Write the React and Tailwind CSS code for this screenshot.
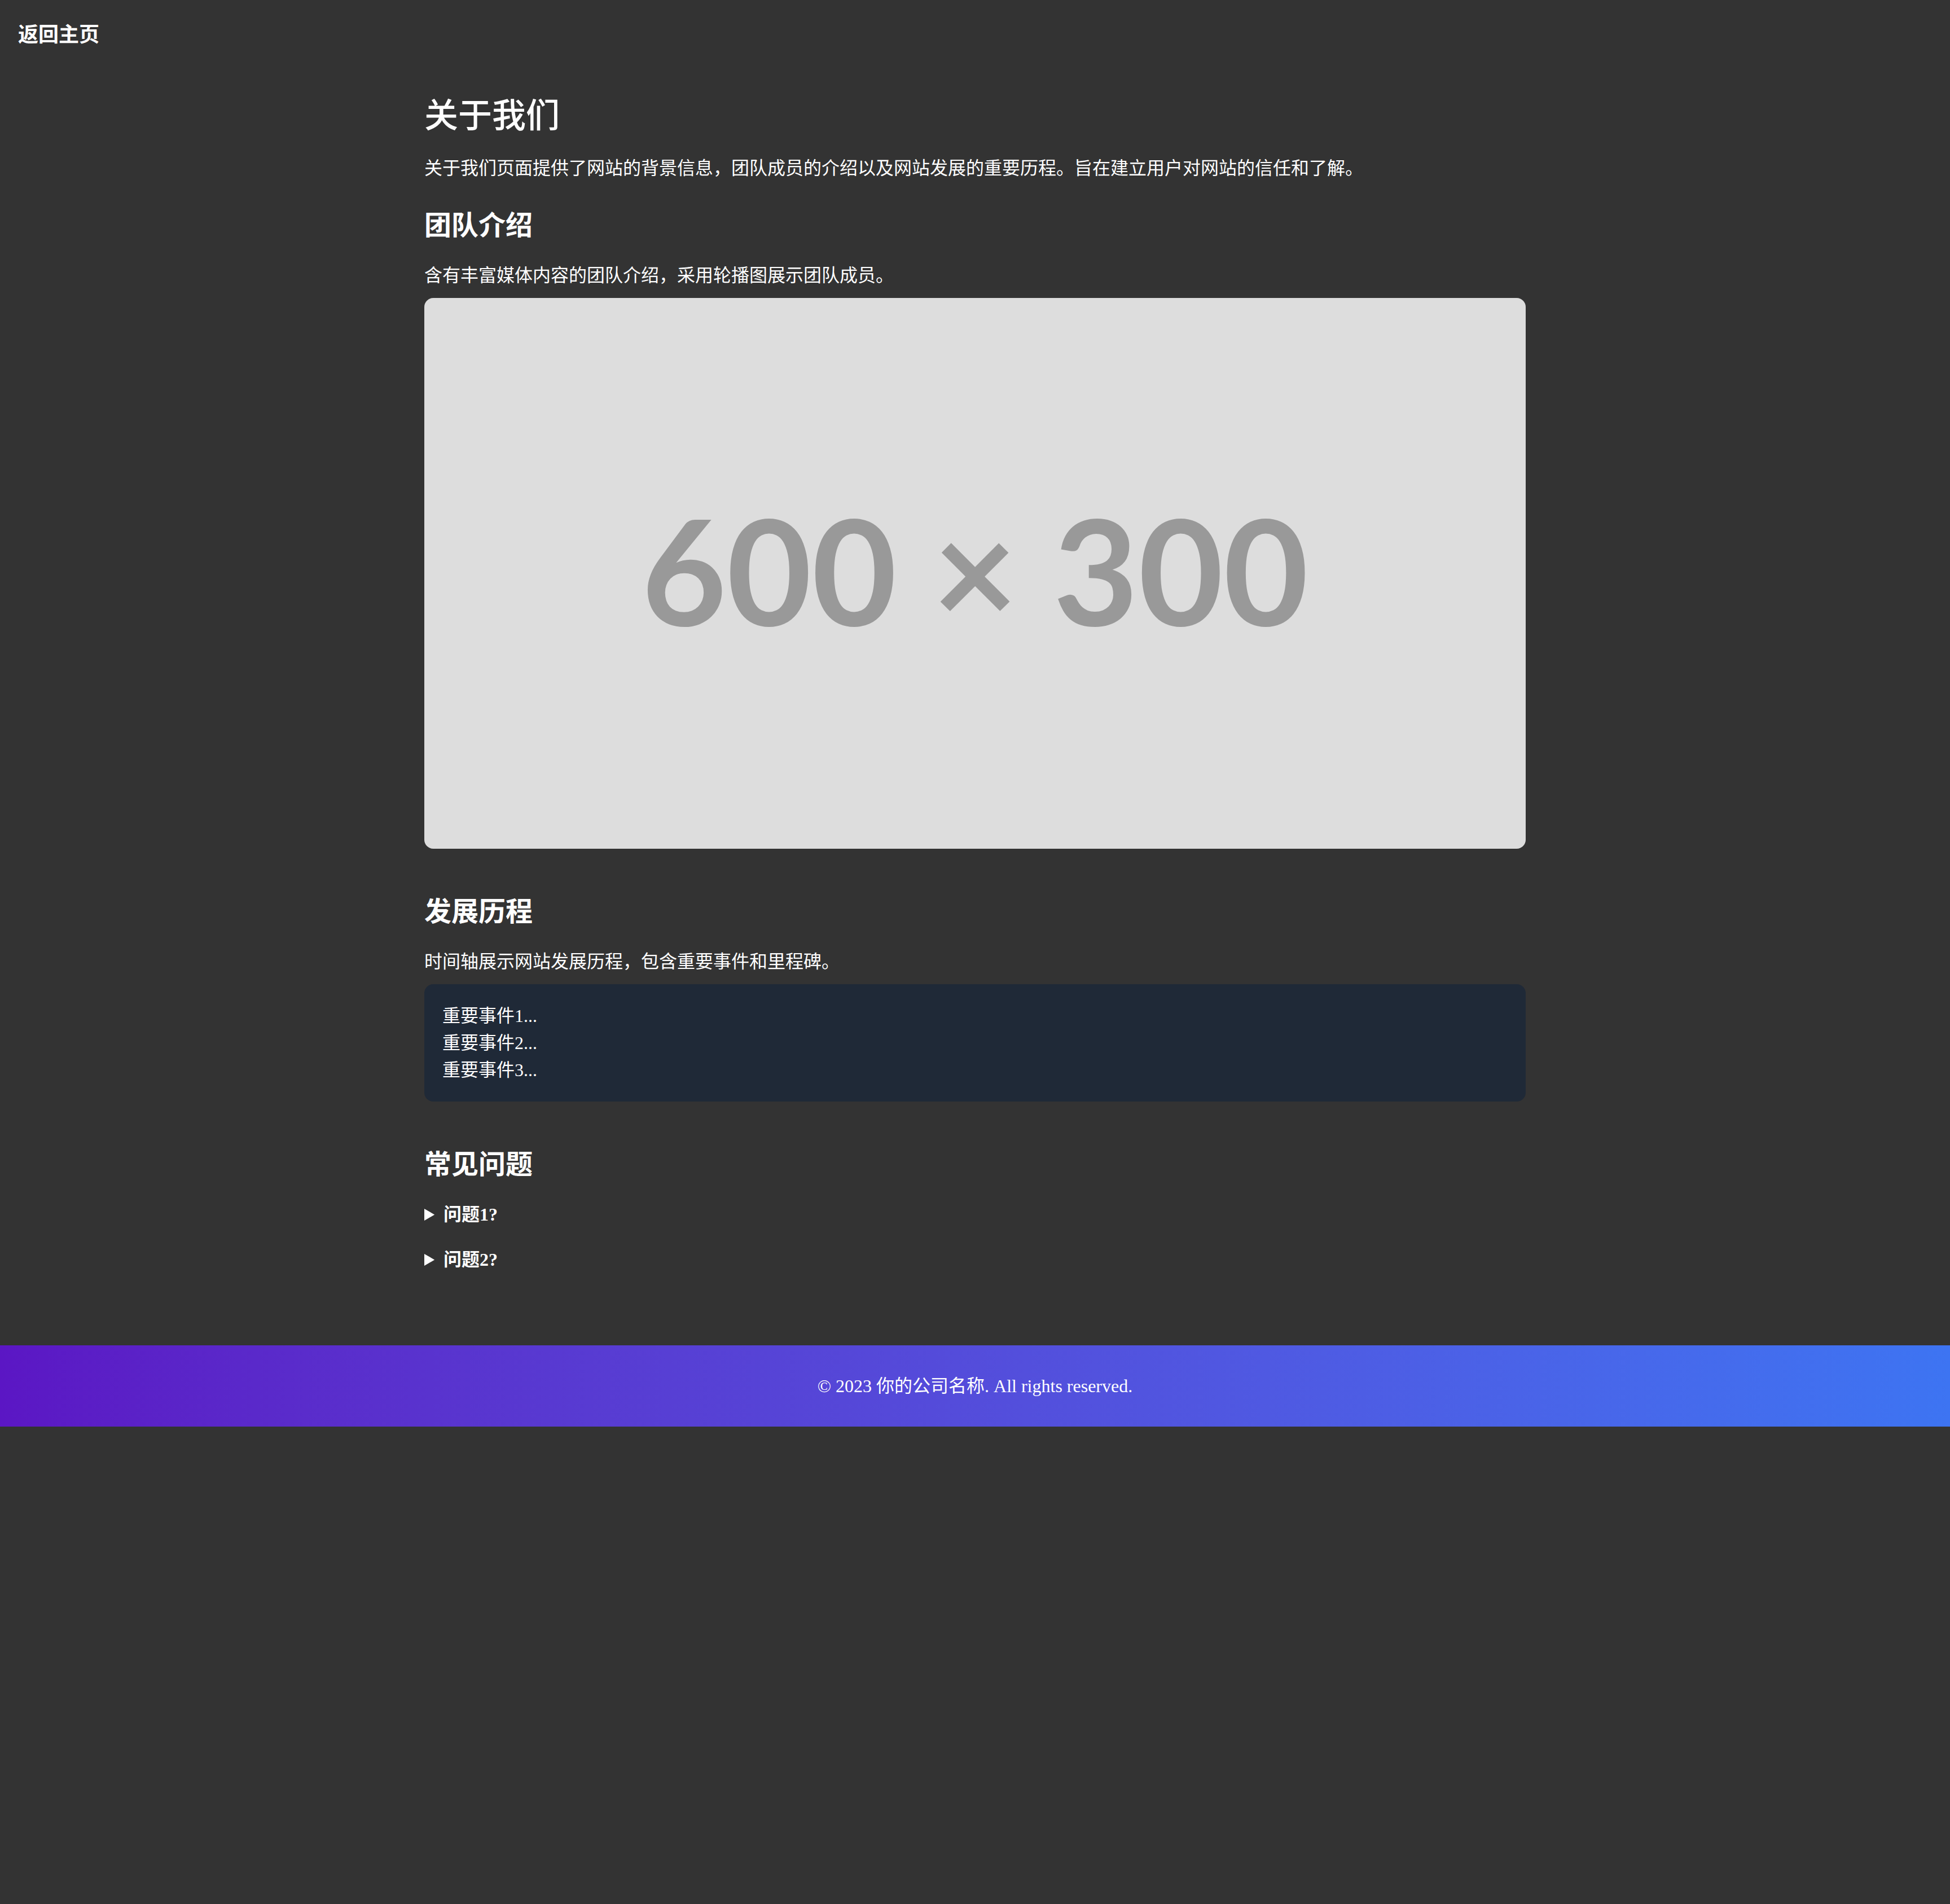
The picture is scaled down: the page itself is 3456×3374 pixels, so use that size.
export default function App() {
  return (
    <div
      className="min-h-screen bg-[#333333] text-white"
      style={{ fontFamily: '"Liberation Serif", "Noto Sans CJK SC", serif' }}
    >
      <nav className="px-[32px] pt-[34px] pb-[30px]">
        <a href="#" className="text-[36px] leading-[56px] font-semibold text-white">
          返回主页
        </a>
      </nav>

      <main className="mx-auto w-[1952px] pt-[50px]">
        <section>
          <h1 className="text-[60px] leading-[72px] font-medium mb-[32px]">关于我们</h1>
          <p className="text-[32px] leading-[48px] mb-[46px]">
            关于我们页面提供了网站的背景信息，团队成员的介绍以及网站发展的重要历程。旨在建立用户对网站的信任和了解。
          </p>
        </section>

        <section>
          <h2 className="text-[48px] leading-[64px] font-semibold mb-[32px]">团队介绍</h2>
          <p className="text-[32px] leading-[48px] mb-[16px]">
            含有丰富媒体内容的团队介绍，采用轮播图展示团队成员。
          </p>
          <div className="h-[976px] w-full rounded-[16px] bg-[#dddddd] flex items-center justify-center pb-[16px]">
            <span
              className="text-[260px] leading-none font-bold text-[#999999]"
              style={{ fontFamily: 'Lato, "Open Sans", sans-serif' }}
            >
              600 × 300
            </span>
          </div>
        </section>

        <section className="mt-[80px]">
          <h2 className="text-[48px] leading-[64px] font-semibold mb-[32px]">发展历程</h2>
          <p className="text-[32px] leading-[48px] mb-[16px]">
            时间轴展示网站发展历程，包含重要事件和里程碑。
          </p>
          <div className="rounded-[16px] bg-[#1f2937] p-[32px] text-[32px] leading-[48px]">
            <p>重要事件1...</p>
            <p>重要事件2...</p>
            <p>重要事件3...</p>
          </div>
        </section>

        <section className="mt-[80px] pb-[128px]">
          <h2 className="text-[48px] leading-[64px] font-semibold mb-[32px]">常见问题</h2>
          <div className="flex flex-col gap-[32px] text-[32px] leading-[48px]">
            <details>
              <summary className="font-bold cursor-pointer">问题1?</summary>
              <p>这是问题1的答案。</p>
            </details>
            <details>
              <summary className="font-bold cursor-pointer">问题2?</summary>
              <p>这是问题2的答案。</p>
            </details>
          </div>
        </section>
      </main>

      <footer className="bg-gradient-to-r from-[#5b16c4] to-[#3d74f2] py-[48px] text-center text-[32px] leading-[48px]">
        © 2023 你的公司名称. All rights reserved.
      </footer>
    </div>
  );
}
